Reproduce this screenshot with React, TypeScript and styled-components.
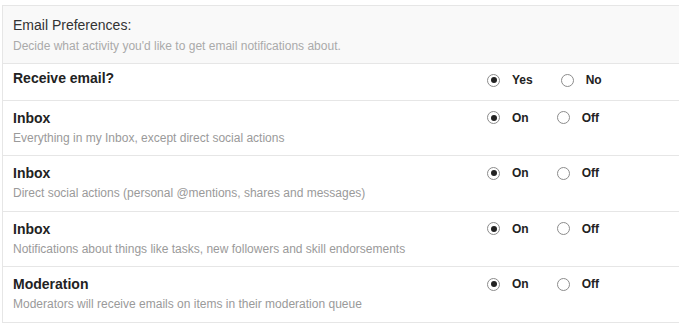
import { styled, createGlobalStyle } from 'styled-components';

const GlobalStyle = createGlobalStyle`
  html, body {
    margin: 0;
    padding: 0;
    background: #fff;
    overflow: hidden;
  }
  body {
    font-family: "Liberation Sans", Arial, sans-serif;
  }
`;

const Panel = styled.div`
  margin: 5px 0 0 2px;
  border-top: 1px solid #e6e6e6;
  border-left: 1px solid #e6e6e6;
`;

const Header = styled.div`
  background: #f9f9f9;
  padding: 9.5px 10px 9px;
  border-bottom: 1px solid #e6e6e6;
  h3 {
    margin: 0;
    font-size: 14px;
    font-weight: 400;
    line-height: 18px;
    color: #333;
  }
  p {
    margin: 4px 0 0;
    font-size: 12px;
    line-height: 16px;
    color: #aaa;
  }
`;

const Row = styled.div<{ $compact?: boolean }>`
  display: grid;
  grid-template-columns: 474px 1fr;
  align-items: start;
  padding: ${({ $compact }) => ($compact ? '4px 10px 9.5px' : '7px 10px 8.5px')};
  border-bottom: 1px solid #e6e6e6;
`;

const Info = styled.div`
  .title {
    font-size: 14px;
    font-weight: 700;
    line-height: 20px;
    color: #222;
  }
  .desc {
    margin-top: 1px;
    font-size: 12px;
    line-height: 18px;
    color: #9a9a9a;
  }
`;

const Options = styled.div<{ $offset?: number }>`
  display: flex;
  align-items: center;
  height: 20px;
  margin-top: ${({ $offset }) => $offset ?? 0}px;
`;

const Option = styled.label`
  display: flex;
  align-items: center;
  margin-right: 28px;
  font-size: 12px;
  font-weight: 700;
  color: #222;
  line-height: 20px;
`;

const Radio = styled.span<{ $checked?: boolean }>`
  box-sizing: border-box;
  width: 13px;
  height: 13px;
  margin-right: 12px;
  border: 1px solid #8c8c8c;
  border-radius: 50%;
  background: #fff;
  display: flex;
  align-items: center;
  justify-content: center;
  &::after {
    content: '';
    display: ${({ $checked }) => ($checked ? 'block' : 'none')};
    width: 6px;
    height: 6px;
    border-radius: 50%;
    background: #222;
  }
`;

const rows = [
  { title: 'Inbox', desc: 'Everything in my Inbox, except direct social actions' },
  { title: 'Inbox', desc: 'Direct social actions (personal @mentions, shares and messages)' },
  { title: 'Inbox', desc: 'Notifications about things like tasks, new followers and skill endorsements' },
  { title: 'Moderation', desc: 'Moderators will receive emails on items in their moderation queue' },
];

export default function App() {
  return (
    <>
      <GlobalStyle />
      <Panel>
        <Header>
          <h3>Email Preferences:</h3>
          <p>Decide what activity you'd like to get email notifications about.</p>
        </Header>
        <Row $compact>
          <Info>
            <div className="title">Receive email?</div>
          </Info>
          <Options $offset={2.5}>
            <Option>
              <Radio $checked />
              Yes
            </Option>
            <Option>
              <Radio />
              No
            </Option>
          </Options>
        </Row>
        {rows.map((r, i) => (
          <Row key={i}>
            <Info>
              <div className="title">{r.title}</div>
              <div className="desc">{r.desc}</div>
            </Info>
            <Options>
              <Option>
                <Radio $checked />
                On
              </Option>
              <Option>
                <Radio />
                Off
              </Option>
            </Options>
          </Row>
        ))}
      </Panel>
    </>
  );
}
